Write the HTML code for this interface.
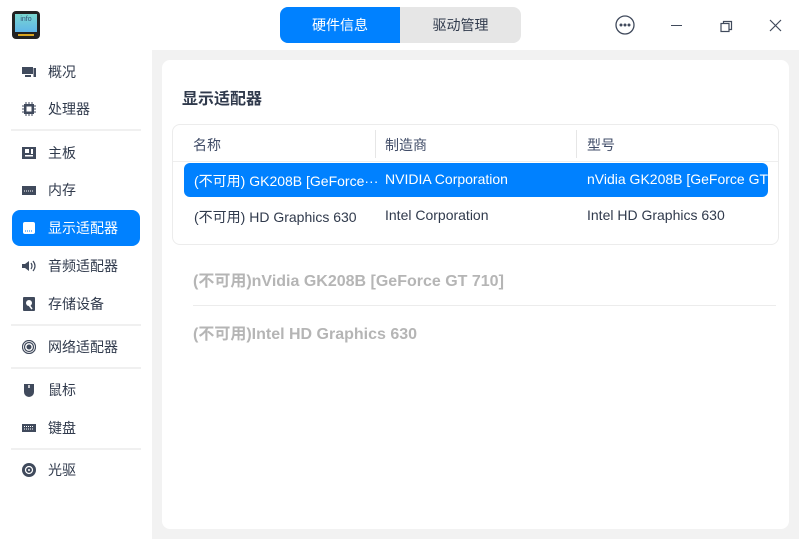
<!DOCTYPE html>
<html><head><meta charset="utf-8"><style>
*{margin:0;padding:0;box-sizing:border-box}
body{width:799px;height:539px;background:#f2f2f2;font-family:"Liberation Sans","Noto Sans CJK SC",sans-serif;position:relative;overflow:hidden;color:#303a4c}
.abs{position:absolute}
.top{left:0;top:0;width:799px;height:50px;background:#fff}
.side{left:0;top:50px;width:152px;height:489px;background:#fff}
.it{position:absolute;left:12px;width:128px;height:36px;font-size:14px;line-height:36px;padding-left:36px;color:#303a4c}
.it.sel{background:#0081ff;color:#fff;border-radius:8px}
.ic{position:absolute;left:10px;top:11px;width:14px;height:14px}
.dv{position:absolute;left:11px;width:130px;height:2px;background:#f0f0f0}
.card{left:162px;top:60px;width:627px;height:469px;background:#fff;border-radius:8px}
.tbl{left:172px;top:124px;width:607px;height:121px;border:1px solid #ececec;border-radius:8px;background:#fff}
.c{position:absolute;font-size:14px;white-space:nowrap}
.g{position:absolute;left:193px;font-size:16px;font-weight:bold;color:#b5b5b5}
</style></head><body>
<div class="abs top"></div>
<div class="abs" style="left:12px;top:11px;width:28px;height:28px;border-radius:4px;background:#222"><div style="position:absolute;left:3px;top:3px;width:22px;height:18px;background:linear-gradient(#7ad7d0,#5fb5e8);font-size:7px;color:#357;text-align:center;line-height:12px">info</div><div style="position:absolute;left:6px;top:23px;width:16px;height:2px;background:#d9a520"></div></div>
<div class="abs" style="left:280px;top:7px;width:241px;height:36px;border-radius:8px;background:#e6e6e6"></div>
<div class="abs" style="left:280px;top:7px;width:120px;height:36px;border-radius:8px 0 0 8px;background:#0081ff;color:#fff;font-size:14px;line-height:36px;text-align:center">硬件信息</div>
<div class="abs" style="left:400px;top:7px;width:121px;height:36px;color:#303a4c;font-size:14px;line-height:36px;text-align:center">驱动管理</div>
<svg class="abs" style="left:614px;top:14px" width="22" height="22"><circle cx="11" cy="11" r="9" fill="none" stroke="#404a5c" stroke-width="1.3"/><circle cx="7" cy="11" r="1.5" fill="#404a5c"/><circle cx="11" cy="11" r="1.5" fill="#404a5c"/><circle cx="15" cy="11" r="1.5" fill="#404a5c"/></svg>
<div class="abs" style="left:671px;top:25px;width:11px;height:1.3px;background:#404a5c"></div>
<svg class="abs" style="left:720px;top:20px" width="13" height="13"><rect x="1" y="3.5" width="8" height="8" fill="none" stroke="#404a5c" stroke-width="1.2"/><path d="M3.5 3.5V1.5h8v8h-2" fill="none" stroke="#404a5c" stroke-width="1.2"/></svg>
<svg class="abs" style="left:769px;top:19px" width="13" height="13"><path d="M1 1L12 12M12 1L1 12" stroke="#404a5c" stroke-width="1.2"/></svg>
<div class="abs side"></div>
<div class="it" style="top:54px"><svg class="ic" viewBox="0 0 14 14"><rect x="0" y="2" width="11" height="7" fill="#404a5c"/><rect x="3" y="10" width="6" height="2" fill="#404a5c"/><rect x="11.5" y="3" width="2.5" height="9" fill="#404a5c"/></svg>概况</div>
<div class="it" style="top:91px"><svg class="ic" viewBox="0 0 14 14"><rect x="2" y="2" width="10" height="10" fill="#404a5c"/><rect x="4.5" y="4.5" width="5" height="5" fill="#fff"/><path d="M4 0v14M7 0v14M10 0v14M0 4h14M0 7h14M0 10h14" stroke="#404a5c" stroke-width="1" stroke-dasharray="2 10"/></svg>处理器</div>
<div class="dv" style="top:129px"></div>
<div class="it" style="top:135px"><svg class="ic" viewBox="0 0 14 14"><rect x="0" y="1" width="14" height="12" fill="#404a5c"/><rect x="3" y="3" width="4" height="4" fill="#fff"/><rect x="9" y="3" width="2" height="5" fill="#fff"/><rect x="3" y="9" width="8" height="1.5" fill="#fff"/></svg>主板</div>
<div class="it" style="top:172px"><svg class="ic" viewBox="0 0 14 14"><rect x="0" y="3" width="14" height="9" fill="#404a5c"/><path d="M2 8h10" stroke="#fff" stroke-dasharray="1 1"/></svg>内存</div>
<div class="it sel" style="top:210px"><svg class="ic" viewBox="0 0 14 14"><rect x="1" y="1" width="12" height="12" rx="2" fill="#fff"/><path d="M3 10h8" stroke="#0081ff" stroke-dasharray="1 1"/></svg>显示适配器</div>
<div class="it" style="top:248px"><svg class="ic" viewBox="0 0 14 14"><path d="M0 5h3l4-3v10l-4-3H0z" fill="#404a5c"/><path d="M9 4q2 3 0 6M11 2q4 5 0 10" fill="none" stroke="#404a5c" stroke-width="1.2"/></svg>音频适配器</div>
<div class="it" style="top:286px"><svg class="ic" viewBox="0 0 14 14"><rect x="1" y="0" width="12" height="14" rx="1" fill="#404a5c"/><circle cx="7" cy="6" r="3" fill="#fff"/><path d="M7 8l3 4" stroke="#fff" stroke-width="1.5"/></svg>存储设备</div>
<div class="dv" style="top:324px"></div>
<div class="it" style="top:329px"><svg class="ic" viewBox="0 0 14 14"><circle cx="7" cy="7" r="2.5" fill="#404a5c"/><circle cx="7" cy="7" r="4.5" fill="none" stroke="#404a5c" stroke-width="1.2"/><circle cx="7" cy="7" r="6.5" fill="none" stroke="#404a5c" stroke-width="1.2"/></svg>网络适配器</div>
<div class="dv" style="top:367px"></div>
<div class="it" style="top:372px"><svg class="ic" viewBox="0 0 14 14"><path d="M2 1h10v8a5 5 0 0 1-10 0z" fill="#404a5c"/><rect x="6.3" y="2" width="1.4" height="3" fill="#fff"/></svg>鼠标</div>
<div class="it" style="top:410px"><svg class="ic" viewBox="0 0 14 14"><rect x="0" y="3" width="14" height="8" fill="#404a5c"/><path d="M2 5.5h10M2 8h10" stroke="#fff" stroke-dasharray="1 1"/></svg>键盘</div>
<div class="dv" style="top:448px"></div>
<div class="it" style="top:452px"><svg class="ic" viewBox="0 0 14 14"><circle cx="7" cy="7" r="7" fill="#404a5c"/><circle cx="7" cy="7" r="3.5" fill="none" stroke="#fff" stroke-width="1.2"/><circle cx="7" cy="7" r="1" fill="#fff"/></svg>光驱</div>
<div class="abs card"></div>
<div class="abs" style="left:182px;top:85px;font-size:16px;font-weight:bold;color:#303a4c">显示适配器</div>
<div class="abs tbl"></div>
<div class="abs" style="left:173px;top:161px;width:605px;height:1px;background:#eee"></div>
<div class="abs" style="left:375px;top:130px;width:1px;height:28px;background:#e6e6e6"></div>
<div class="abs" style="left:576px;top:130px;width:1px;height:28px;background:#e6e6e6"></div>
<div class="c" style="left:193px;top:135px;color:#414d68">名称</div>
<div class="c" style="left:385px;top:135px;color:#414d68">制造商</div>
<div class="c" style="left:587px;top:135px;color:#414d68">型号</div>
<div class="abs" style="left:184px;top:163px;width:584px;height:34px;background:#0081ff;border-radius:6px"></div>
<div class="c" style="left:194px;top:171px;color:#fff">(不可用) GK208B [GeForce···</div>
<div class="c" style="left:385px;top:171px;color:#fff">NVIDIA Corporation</div>
<div class="c" style="left:587px;top:171px;color:#fff;width:181px;overflow:hidden">nVidia GK208B [GeForce GT···</div>
<div class="c" style="left:194px;top:207px">(不可用) HD Graphics 630</div>
<div class="c" style="left:385px;top:207px">Intel Corporation</div>
<div class="c" style="left:587px;top:207px">Intel HD Graphics 630</div>
<div class="g" style="top:267px">(不可用)nVidia GK208B [GeForce GT 710]</div>
<div class="abs" style="left:193px;top:305px;width:583px;height:1px;background:#ececec"></div>
<div class="g" style="top:320px">(不可用)Intel HD Graphics 630</div>
</body></html>
